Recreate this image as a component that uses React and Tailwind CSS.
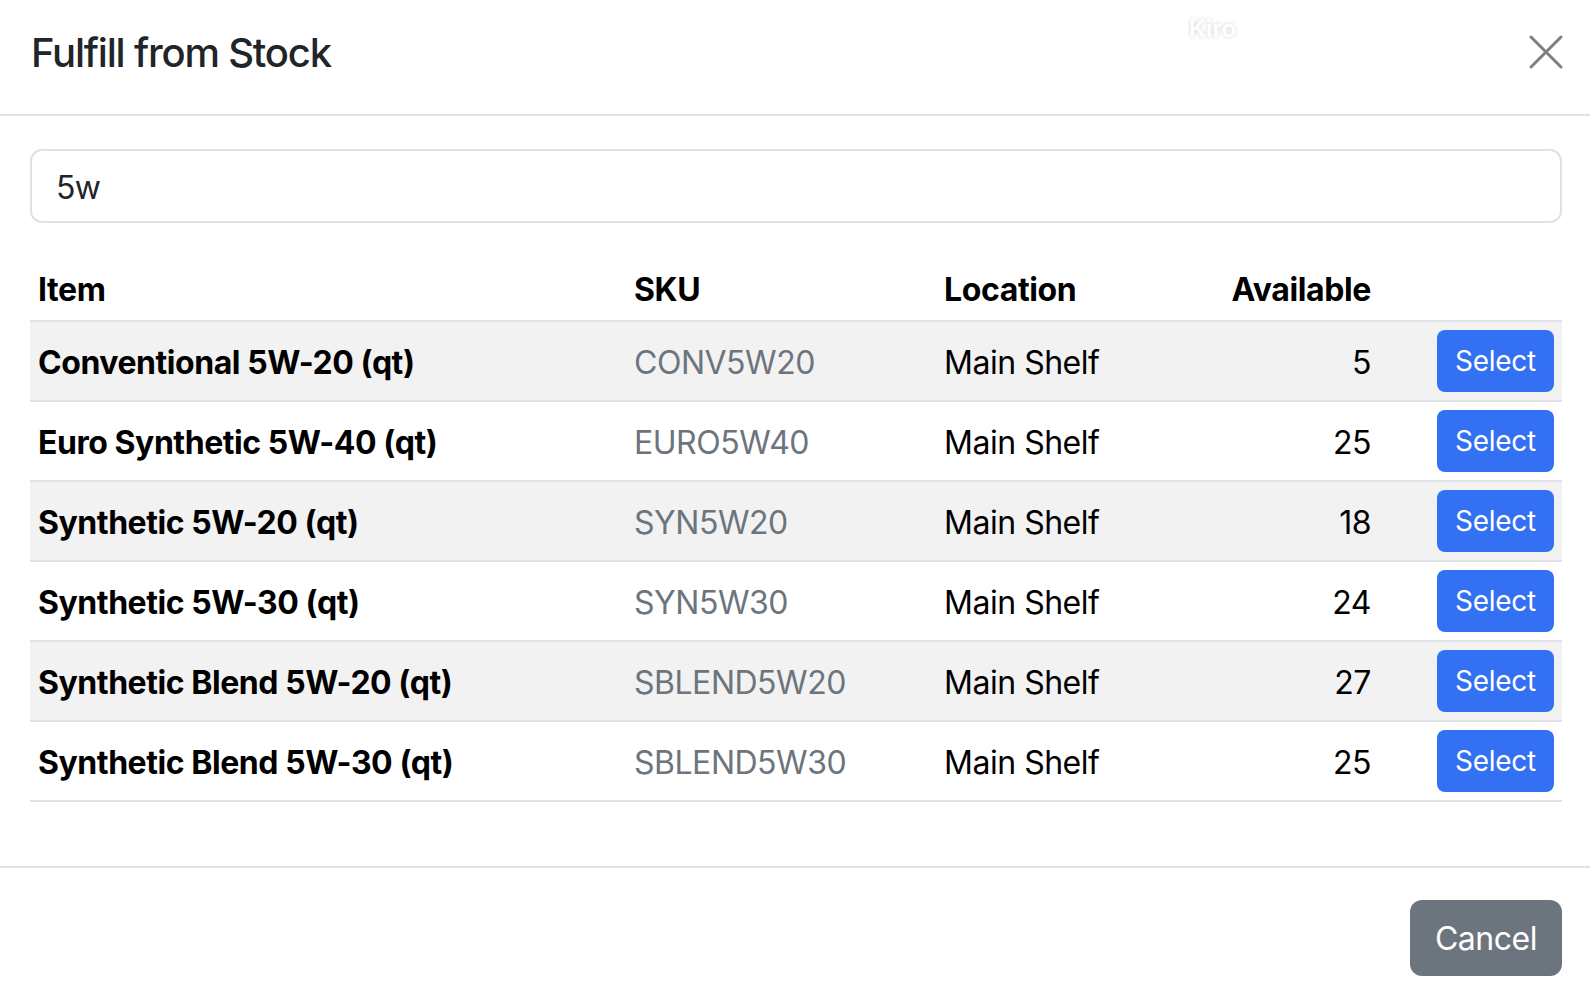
import React from 'react';

const rows = [
  { name: 'Conventional 5W-20 (qt)', sku: 'CONV5W20', location: 'Main Shelf', qty: 5 },
  { name: 'Euro Synthetic 5W-40 (qt)', sku: 'EURO5W40', location: 'Main Shelf', qty: 25 },
  { name: 'Synthetic 5W-20 (qt)', sku: 'SYN5W20', location: 'Main Shelf', qty: 18 },
  { name: 'Synthetic 5W-30 (qt)', sku: 'SYN5W30', location: 'Main Shelf', qty: 24 },
  { name: 'Synthetic Blend 5W-20 (qt)', sku: 'SBLEND5W20', location: 'Main Shelf', qty: 27 },
  { name: 'Synthetic Blend 5W-30 (qt)', sku: 'SBLEND5W30', location: 'Main Shelf', qty: 25 },
];

export default function App() {
  return (
    <div className="relative w-[1590px] h-[990px] overflow-hidden bg-white font-['Inter','Liberation_Sans',sans-serif] text-[#212529] tracking-[-0.03em]">
      {/* Header */}
      <div className="h-[116px] flex items-center justify-between pl-[31px] pr-[27px] border-b-2 border-[#dee2e6]">
        <h5 className="text-[40px] leading-[48px] font-medium -mt-[8px] tracking-[-0.03em]">Fulfill from Stock</h5>
        <button className="w-[34px] h-[34px] -mt-[10px] text-[#7f7f7f]">
          <svg viewBox="0 0 34 34" className="w-full h-full" fill="none" stroke="currentColor" strokeWidth="3" strokeLinecap="round">
            <path d="M2 2 L32 32 M32 2 L2 32" />
          </svg>
        </button>
      </div>

      {/* Body */}
      <div className="pl-[30px] pr-[28px] pt-[33px] pb-[64px]">
        <input
          type="text"
          defaultValue="5w"
          className="block w-full h-[74px] px-[24px] pt-[2px] text-[32px] text-[#212529] border-2 border-[#dee2e6] rounded-[12px] outline-none mb-[33px] tracking-[-0.025em]"
        />

        <table className="w-full table-fixed border-collapse text-black text-[32px] leading-[48px]">
          <colgroup>
            <col className="w-[596px]" />
            <col className="w-[310px]" />
            <col className="w-[264px]" />
            <col className="w-[179px]" />
            <col />
          </colgroup>
          <thead>
            <tr className="border-b-2 border-[#dee2e6]">
              <th className="px-[8px] pt-[10px] pb-[6px] text-left font-bold tracking-[-0.012em]">Item</th>
              <th className="px-[8px] pt-[10px] pb-[6px] text-left font-bold tracking-[-0.012em]">SKU</th>
              <th className="px-[8px] pt-[10px] pb-[6px] text-left font-bold tracking-[-0.012em]">Location</th>
              <th className="px-[8px] pt-[10px] pb-[6px] text-right font-bold tracking-[-0.012em]">Available</th>
              <th className="px-[8px] pt-[10px] pb-[6px]"></th>
            </tr>
          </thead>
          <tbody>
            {rows.map((r, i) => (
              <tr key={r.sku} className={`border-b-2 border-[#dee2e6] ${i % 2 === 0 ? 'bg-[#f2f2f2]' : 'bg-white'}`}>
                <td className="px-[8px] pt-[10px] pb-[6px] font-bold whitespace-nowrap tracking-[-0.014em]">{r.name}</td>
                <td className="px-[8px] pt-[10px] pb-[6px] text-[#6c757d]">{r.sku}</td>
                <td className="px-[8px] pt-[10px] pb-[6px]">{r.location}</td>
                <td className="px-[8px] pt-[10px] pb-[6px] text-right">{r.qty}</td>
                <td className="px-[8px] py-[8px] text-right">
                  <button className="inline-block h-[62px] w-[117px] rounded-[8px] bg-[#3370f3] text-white text-[28px] leading-[42px] align-middle tracking-[-0.01em]">
                    Select
                  </button>
                </td>
              </tr>
            ))}
          </tbody>
        </table>
      </div>

      {/* Footer */}
      <div className="border-t-2 border-[#dee2e6] pt-[32px] pr-[28px] flex justify-end">
        <button className="h-[76px] w-[152px] rounded-[12px] bg-[#6c757d] text-white text-[32px] leading-[48px] pt-[2px]">
          Cancel
        </button>
      </div>

      {/* Watermark */}
      <div className="absolute left-[1189px] top-[11px] text-[24px] font-semibold text-white tracking-normal [text-shadow:0_0_4px_rgba(0,0,0,0.18)]">
        Kiro
      </div>
    </div>
  );
}
